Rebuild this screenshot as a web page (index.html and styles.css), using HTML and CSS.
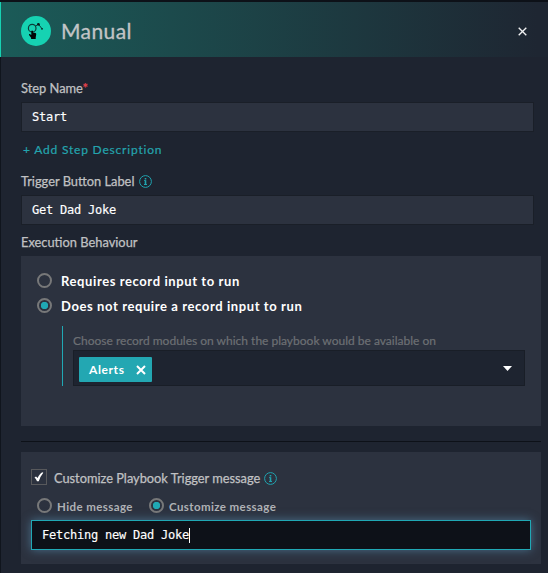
FILE: index.html
```html
<!DOCTYPE html>
<html lang="en">
<head>
<meta charset="utf-8">
<title>Manual</title>
<link rel="stylesheet" href="styles.css">
</head>
<body>
<header class="header">
  <span class="badge">
    <svg width="30" height="30" viewBox="0 0 30 30">
      <circle cx="11.2" cy="12.2" r="3.8" fill="none" stroke="#0b3d38" stroke-width="1.2"/>
      <path d="M14.2 10.2 17.5 8.3 20.9 12.6" fill="none" stroke="#0b3d38" stroke-width="1"/>
      <circle cx="17.4" cy="8.3" r="1.4" fill="#071c1b"/><circle cx="21" cy="12.8" r=".9" fill="#071c1b"/>
      <path d="M10.300 15q.9-.9 1.700.1v1.300l2.500.6q.9.400.7 1.400l-.5 3v1.600h-4.600v-1.300l-2.100-2.600q-.3-1.200.7-1l1.600.8z" fill="#020606"/>
    </svg>
  </span>
  <h1 class="title">Manual</h1>
  <svg class="close" width="9" height="9" viewBox="0 0 9 9"><path d="m.7.7 7.6 7.6m0-7.6L.7 8.3" stroke="#f0f1f2" stroke-width="1.35"/></svg>
</header>
<main class="form">
  <label class="label">Step Name<span class="required">*</span></label>
  <div class="field mono">Start</div>
  <a class="add">+ Add Step Description</a>
  <div class="label trigger"><span class="trigger-text">Trigger Button Label</span>
    <svg class="info" width="13" height="13" viewBox="0 0 13 13"><circle cx="6.5" cy="6.5" r="5.9"/><path class="stem" d="M6.500 5.300v4.500M6.500 2.900v1.500"/><path d="M5.200 5.500h1.300M5 9.500h3"/></svg>
  </div>
  <div class="field mono">Get Dad Joke</div>
  <div class="label execution">Execution Behaviour</div>
  <section class="panel behaviour">
    <div class="option first"><i class="radio"></i><span>Requires record input to run</span></div>
    <div class="option second"><i class="radio on"></i><span>Does not require a record input to run</span></div>
    <div class="modules">
      <div class="hint">Choose record modules on which the playbook would be available on</div>
      <div class="select">
        <div class="chip"><span>Alerts</span><svg width="10" height="10" viewBox="0 0 10 10"><path d="m1 1 8 8m0-8L1 9" stroke="#fff" stroke-width="2"/></svg></div>
        <svg width="9" height="5" viewBox="0 0 9 5"><path d="M0 0h9L4.5 5z" fill="#fff"/></svg>
      </div>
    </div>
  </section>
  <hr class="rule">
  <section class="panel message">
    <div class="check-row">
      <span class="checkbox"><svg width="10" height="10" viewBox="0 0 10 10"><path d="M.5 5.500 2 4.400l1.600 1.700Q5.500 1.500 8.500.2L9.300.7Q6.500 4 4.800 9.200H3Q2 6.800.5 5.500z" fill="#fff"/></svg></span>
      <span class="check-label">Customize Playbook Trigger message</span>
      <svg class="info" width="13" height="13" viewBox="0 0 13 13"><circle cx="6.5" cy="6.5" r="5.9"/><path class="stem" d="M6.500 5.300v4.500M6.500 2.900v1.500"/><path d="M5.200 5.500h1.300M5 9.500h3"/></svg>
    </div>
    <div class="choices">
      <span class="choice hide"><i class="radio"></i><span>Hide message</span></span>
      <span class="choice"><i class="radio on"></i><span>Customize message</span></span>
    </div>
    <div class="focused mono">Fetching new Dad Joke<i class="caret"></i></div>
  </section>
</main>
</body>
</html>
```
FILE: styles.css
```css
* { box-sizing: border-box; }
body {
  margin: 0;
  height: 573px;
  overflow: hidden;
  background: #1e2430;
  border-top: 2px solid #0d1118;
  font-family: Lato, sans-serif;
  white-space: nowrap;
}
svg { display: block; flex: none; }
.header {
  height: 55px;
  border-left: 1px solid #16d2b2;
  background: linear-gradient(90deg, #1b5b58, #1e2632 98%);
  display: flex;
  align-items: center;
  padding: 3px 21px 0 20px;
}
.badge { width: 30px; height: 30px; border-radius: 50%; background: #16d2b2; }
.title { margin: 0 0 0 10px; font-size: 21px; line-height: 28px; font-weight: 400; color: #c2c4c6; letter-spacing: .4px; -webkit-text-stroke: .3px; }
.close { margin-left: auto; }
.form { height: 516px; border-left: 1px solid #10151d; padding: 21px 7px 0 20px; }
.label { display: block; height: 20px; line-height: 20px; font-size: 12.85px; color: #c0c1c3; -webkit-text-stroke: .25px; }
.required { color: #e8434c; }
.field {
  width: 513px;
  height: 30px;
  margin-top: 4px;
  padding-left: 10px;
  border: 1px solid #1a1f28;
  background: #2c323f;
  color: #fff;
  line-height: 29px;
}
.mono { font-family: "DejaVu Sans Mono", monospace; font-size: 12px; letter-spacing: -.224px; -webkit-text-stroke: .15px; }
.add { display: block; margin: 7px 0 0 2px; height: 20px; line-height: 21px; font-size: 12px; letter-spacing: .8px; color: #24a4ae; -webkit-text-stroke: .2px; }
.trigger { margin-top: 12px; display: flex; align-items: center; }
.info { fill: none; stroke: #20a3af; stroke-width: 1; margin-left: 5px; }
.info .stem { stroke-width: 1.6; }
.execution { margin-top: 7px; }
.panel { width: 520px; background: #2c323f; }
.behaviour { height: 170px; margin-top: 4px; padding: 17px 16px 0 16px; }
.option { display: flex; align-items: center; height: 15px; font-size: 13px; font-weight: 700; color: #fff; letter-spacing: .6px; }
.option span { margin-left: 9px; padding-top: 1px; }
.second { margin-top: 10px; }
.radio { width: 15px; height: 15px; flex: none; border: 2px solid #777879; border-radius: 50%; }
.radio.on { background: radial-gradient(circle, #20a8b4 3.4px, transparent 4px); }
.modules { margin: 13px 0 0 25px; width: 463px; height: 60px; border-left: 1px solid #20a8b4; padding-left: 10px; }
.hint { height: 24px; line-height: 30px; font-size: 12px; color: #6d7074; -webkit-text-stroke: .2px; }
.select { height: 36px; border: 1px solid #191e27; background: #1e2430; display: flex; align-items: center; justify-content: space-between; padding: 0 12px 0 5px; }
.chip { width: 73px; height: 25px; margin-top: 2px; padding: 1px 6px 0 10px; border-radius: 1px; background: #23a7b2; display: flex; align-items: center; justify-content: space-between; color: #fff; font-size: 12px; font-weight: 700; letter-spacing: .6px; }
.rule { width: 520px; height: 1px; margin: 15px 0 10px; border: 0; background: #0d1118; }
.message { height: 112px; padding: 17px 10px 0; }
.check-row { display: flex; align-items: center; height: 16px; }
.checkbox { width: 16px; height: 16px; border: 1px solid #58595c; display: grid; place-items: center; }
.check-label { margin-left: 7px; padding-top: 2px; font-size: 12.8px; color: #c0c1c3; -webkit-text-stroke: .25px; }
.check-row .info { margin: 2px 0 0 4px; }
.choices { display: flex; margin: 13px 0 7px 6px; height: 15px; }
.choice { display: flex; align-items: center; color: #afb1b5; font-size: 11.5px; font-weight: 700; letter-spacing: .4px; }
.choice span { margin-left: 5px; padding-top: 2px; }
.hide { width: 112px; }
.focused { display: flex; align-items: center; height: 30px; padding-left: 10px; border: 1px solid #20a8b4; background: #0d1118; color: #fff; box-shadow: 0 0 9px rgba(91, 151, 190, .6); }
.caret { width: 1px; height: 15px; background: #fff; }
```
